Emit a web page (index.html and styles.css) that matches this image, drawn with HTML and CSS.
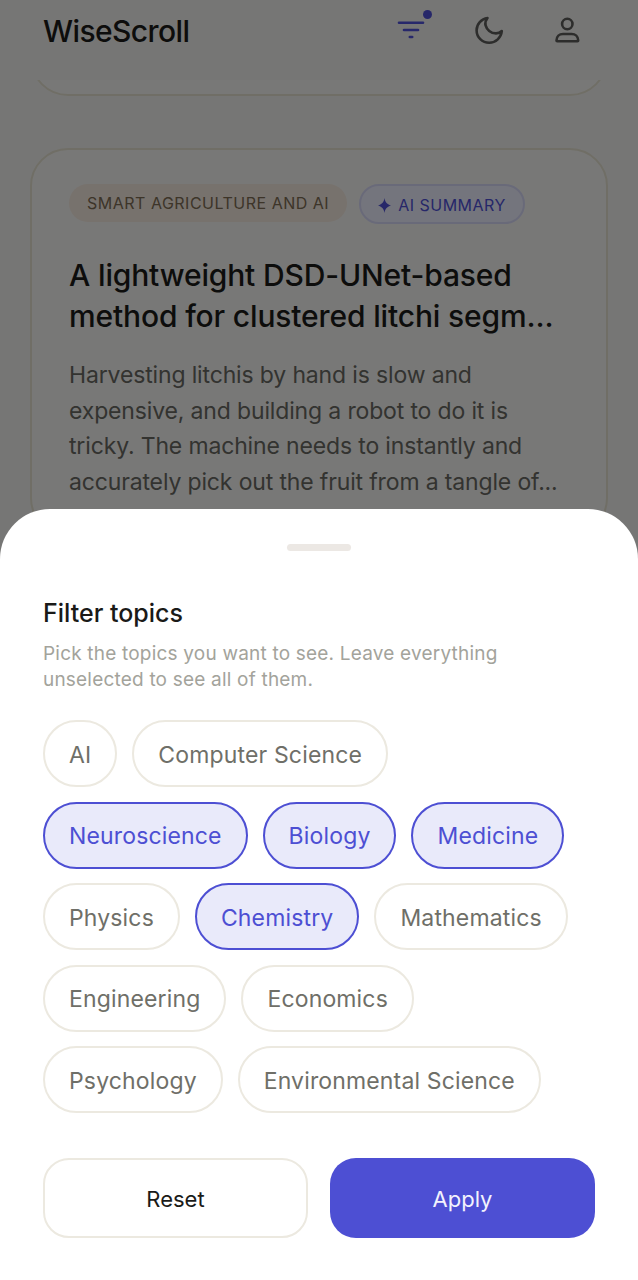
FILE: index.html
```html
<!DOCTYPE html>
<html lang="en">
  <head>
    <meta charset="UTF-8" />
    <title>WiseScroll</title>
    <link rel="stylesheet" href="styles.css">
  </head>
  <body>
    <header class="topbar">
      <div class="logo">WiseScroll</div>
      <div class="topbar-icons">
        <button class="icon-btn filter-btn" type="button" aria-label="Filter">
          <svg width="34" height="34" viewBox="0 0 34 34" fill="none" stroke="#4f50d6" stroke-width="2.6" stroke-linecap="round">
            <path d="M5 8.7H29" /><path d="M10 16H24" /><path d="M15.8 23H18.2" />
          </svg>
          <span class="dot"></span>
        </button>
        <button class="icon-btn" type="button" aria-label="Theme">
          <svg width="34" height="34" viewBox="0 0 34 34" fill="none" stroke="#5a5a58" stroke-width="2.6" stroke-linecap="round" stroke-linejoin="round">
            <path d="M15.5 4C9.4 4.8 4.6 10 4.6 16.2 4.6 23.2 10.2 28.8 17.2 28.8 23.8 28.8 29.2 23.6 29.8 17 28.2 18.6 26.2 19.4 24 19.4 18.8 19.4 14.6 15.4 13.6 11.4 13 8.8 13.8 6 15.5 4Z" />
          </svg>
        </button>
        <button class="icon-btn" type="button" aria-label="Account">
          <svg width="34" height="34" viewBox="0 0 34 34" fill="none" stroke="#5a5a58" stroke-width="2.6" stroke-linejoin="round">
            <circle cx="17.3" cy="10" r="5.2" />
            <path d="M6.5 26.6C6.5 22.4 9.4 20 13 20H21.6C25.2 20 28.2 22.4 28.2 26.6 28.2 27 27.9 27.2 27.5 27.2H7.2C6.8 27.2 6.5 27 6.5 26.6Z" />
          </svg>
        </button>
      </div>
    </header>

    <main class="feed">
      <div class="card card-prev"></div>
      <article class="card">
        <div class="tags">
          <span class="tag tag-topic">SMART AGRICULTURE AND AI</span>
          <span class="tag tag-ai">
            <svg class="spark" width="13" height="15" viewBox="0 0 13 15">
              <path d="M6.5 0C7.2 4 8.6 6 13 7.5 8.6 9 7.2 11 6.5 15 5.8 11 4.4 9 0 7.5 4.4 6 5.8 4 6.5 0Z" />
            </svg>
            AI SUMMARY
          </span>
        </div>
        <h2 class="card-title">A lightweight DSD-UNet-based method for clustered litchi segm...</h2>
        <p class="card-text">Harvesting litchis by hand is slow and expensive, and building a robot to do it is tricky. The machine needs to instantly and accurately pick out the fruit from a tangle of...</p>
      </article>
    </main>

    <div class="backdrop">
      <section class="sheet">
        <div class="handle"></div>
        <h3 class="sheet-title">Filter topics</h3>
        <p class="sheet-desc">Pick the topics you want to see. Leave everything unselected to see all of them.</p>
        <div class="chips">
          <button class="chip" type="button">AI</button>
          <button class="chip" type="button">Computer Science</button>
          <button class="chip active" type="button">Neuroscience</button>
          <button class="chip active" type="button">Biology</button>
          <button class="chip active" type="button">Medicine</button>
          <button class="chip" type="button">Physics</button>
          <button class="chip active" type="button">Chemistry</button>
          <button class="chip" type="button">Mathematics</button>
          <button class="chip" type="button">Engineering</button>
          <button class="chip" type="button">Economics</button>
          <button class="chip" type="button">Psychology</button>
          <button class="chip" type="button">Environmental Science</button>
        </div>
        <div class="actions">
          <button class="action action-reset" type="button">Reset</button>
          <button class="action action-apply" type="button">Apply</button>
        </div>
      </section>
    </div>
  </body>
</html>
```

FILE: styles.css
```css
:root {
  --bg-color: #ededeb;
  --surface-color: #f1f1ef;
  --line-color: #ece9e0;
  --text-color: #1a1a18;
  --muted-color: #6f6f68;
  --accent-color: #4d4fd3;
  --accent-soft: #e9eafa;
}

* {
  box-sizing: border-box;
}

html,
body {
  height: 1280px;
}

body {
  margin: 0;
  overflow: hidden;
  position: relative;
  font-family: "Inter", "Noto Sans", sans-serif;
  background-color: var(--bg-color);
  color: var(--text-color);
}

button {
  font-family: inherit;
  background: none;
  border: none;
  padding: 0;
}

.topbar {
  position: relative;
  z-index: 1;
  height: 80px;
  padding: 0 43px;
  display: flex;
  align-items: center;
  justify-content: space-between;
  background-color: var(--bg-color);
}

.logo {
  font-size: 30px;
  font-weight: 500;
  letter-spacing: -0.6px;
  margin-top: -18px;
}

.topbar-icons {
  display: flex;
  gap: 44px;
  margin-top: -18px;
  margin-right: 11px;
}

.icon-btn {
  position: relative;
  width: 34px;
  height: 34px;
}

.dot {
  position: absolute;
  top: -4.5px;
  right: -3.5px;
  width: 9px;
  height: 9px;
  border-radius: 50%;
  background-color: var(--accent-color);
}

.feed {
  padding: 0 30px;
  display: flex;
  flex-direction: column;
  gap: 52px;
}

.card {
  background-color: var(--surface-color);
  border: 2px solid #e0ddcc;
  border-radius: 38px;
  padding: 34px 37px;
}

.card-prev {
  height: 76px;
  margin-top: -60px;
  padding: 0;
}

.tags {
  display: flex;
  gap: 12px;
  align-items: flex-start;
}

.tag {
  border-radius: 20px;
  font-size: 16px;
  letter-spacing: 0.5px;
  white-space: nowrap;
}

.tag-topic {
  padding: 9px 18px;
  background-color: #efe4da;
  color: #7a6a52;
}

.tag-ai {
  display: flex;
  align-items: center;
  gap: 7px;
  height: 40px;
  padding: 1px 17px 0;
  background-color: var(--accent-soft);
  border: 2px solid #d3d4f3;
  color: var(--accent-color);
}

.spark {
  fill: var(--accent-color);
  margin-top: 2px;
}

.card-title {
  margin: 31px 0 0;
  font-size: 30px;
  line-height: 41px;
  font-weight: 500;
  letter-spacing: -0.15px;
}

.card-text {
  margin: 21px 0 0;
  font-size: 23px;
  line-height: 35.5px;
  letter-spacing: -0.15px;
  color: #666660;
}

.backdrop {
  position: absolute;
  inset: 0;
  z-index: 2;
  display: flex;
  flex-direction: column;
  justify-content: flex-end;
  background-color: rgba(0, 0, 0, 0.5);
}

.sheet {
  height: 771px;
  padding: 35px 43px 0;
  background-color: #fff;
  border-radius: 50px 50px 0 0;
}

.handle {
  width: 64px;
  height: 7px;
  margin: 0 auto;
  border-radius: 4px;
  background-color: #ece8e4;
}

.sheet-title {
  margin: 45px 0 0;
  font-size: 25px;
  line-height: 34px;
  font-weight: 500;
}

.sheet-desc {
  margin: 11px 0 0;
  font-size: 19px;
  line-height: 26px;
  letter-spacing: 0.2px;
  color: #a3a39b;
}

.chips {
  margin-top: 27px;
  display: flex;
  flex-wrap: wrap;
  gap: 14.5px 15px;
}

.chip {
  height: 67px;
  padding: 2px 24px 0;
  border: 2px solid var(--line-color);
  border-radius: 34px;
  font-size: 23px;
  letter-spacing: 0.15px;
  color: var(--muted-color);
  background-color: #fff;
}

.chip.active {
  border-color: var(--accent-color);
  background-color: var(--accent-soft);
  color: var(--accent-color);
}

.actions {
  margin-top: 45px;
  display: grid;
  grid-template-columns: 1fr 1fr;
  gap: 22px;
}

.action {
  height: 80px;
  padding-top: 2px;
  border-radius: 26px;
  font-size: 22px;
}

.action-reset {
  border: 2px solid var(--line-color);
  color: var(--text-color);
}

.action-apply {
  background-color: var(--accent-color);
  color: #f2f2fd;
}
```
